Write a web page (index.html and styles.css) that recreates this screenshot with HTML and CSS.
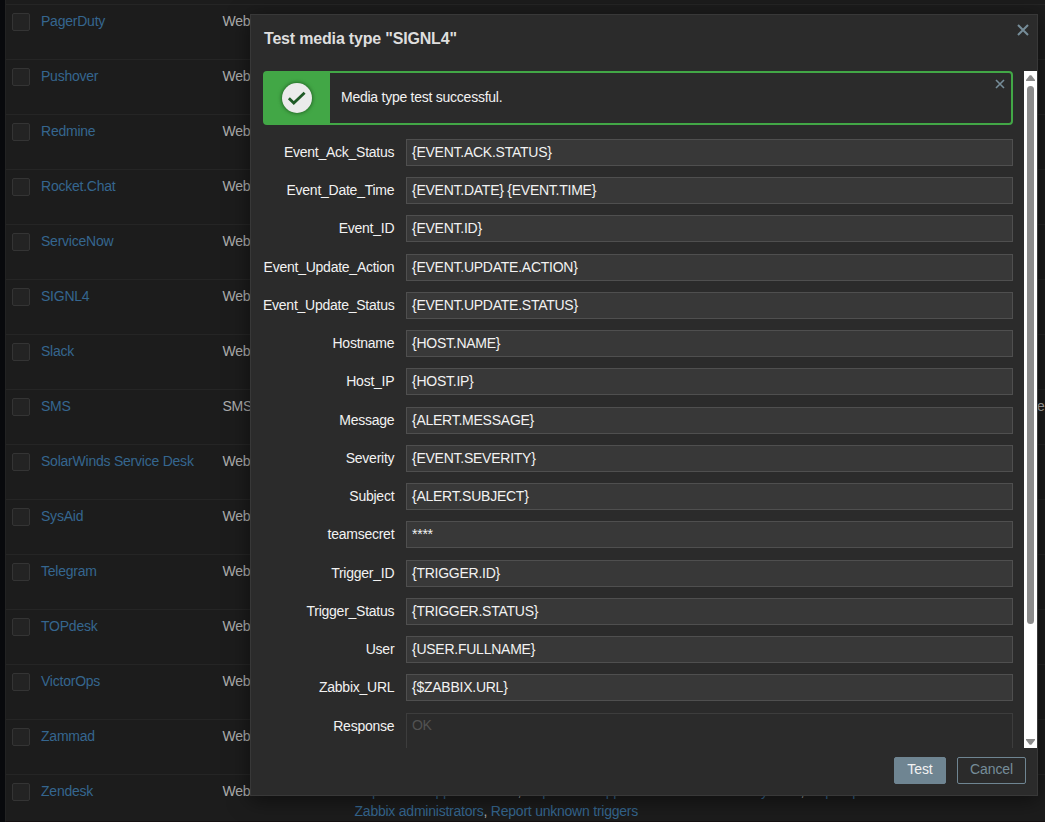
FILE: index.html
```
<!DOCTYPE html>
<html lang="en">
<head>
<meta charset="utf-8">
<title>Media types</title>
<link rel="stylesheet" href="styles.css">
</head>
<body>
<main class="list">
  <div class="row"><span class="check"></span><a class="name">PagerDuty</a><span class="type">Web</span></div>
  <div class="row"><span class="check"></span><a class="name">Pushover</a><span class="type">Web</span></div>
  <div class="row"><span class="check"></span><a class="name">Redmine</a><span class="type">Web</span></div>
  <div class="row"><span class="check"></span><a class="name">Rocket.Chat</a><span class="type">Web</span></div>
  <div class="row"><span class="check"></span><a class="name">ServiceNow</a><span class="type">Web</span></div>
  <div class="row"><span class="check"></span><a class="name">SIGNL4</a><span class="type">Web</span></div>
  <div class="row"><span class="check"></span><a class="name">Slack</a><span class="type">Web</span></div>
  <div class="row"><span class="check"></span><a class="name">SMS</a><span class="type">SMS</span><span class="details">e</span></div>
  <div class="row"><span class="check"></span><a class="name">SolarWinds Service Desk</a><span class="type">Web</span></div>
  <div class="row"><span class="check"></span><a class="name">SysAid</a><span class="type">Web</span></div>
  <div class="row"><span class="check"></span><a class="name">Telegram</a><span class="type">Web</span></div>
  <div class="row"><span class="check"></span><a class="name">TOPdesk</a><span class="type">Web</span></div>
  <div class="row"><span class="check"></span><a class="name">VictorOps</a><span class="type">Web</span></div>
  <div class="row"><span class="check"></span><a class="name">Zammad</a><span class="type">Web</span></div>
  <div class="row"><span class="check"></span><a class="name">Zendesk</a><span class="type">Web</span><span class="actions"><a>Report not supported items</a>, <a>Report not supported low level discovery rules</a>, <a>Report problems to<br>Zabbix administrators</a>, <a>Report unknown triggers</a></span></div>
</main>

<section class="dialog">
  <header class="dialog-head">
    <h4 class="title">Test media type "SIGNL4"</h4>
    <svg class="close" width="12" height="12" viewBox="0 0 12 12"><path d="M1 1L11 11M11 1L1 11"/></svg>
  </header>
  <div class="scroll">
    <div class="content">
      <div class="message">
        <div class="message-icon">
          <svg width="42" height="42" viewBox="0 0 42 42"><circle class="disc" cx="21" cy="21" r="15"/><path class="tick" d="M12.9 21.2L17.8 26L28.6 15.8"/></svg>
        </div>
        <span class="message-text">Media type test successful.</span>
        <svg class="message-close" width="10" height="10" viewBox="0 0 10 10"><path d="M1 1L9 9M9 1L1 9"/></svg>
      </div>
      <div class="form">
        <label>Event_Ack_Status</label><div class="field">{EVENT.ACK.STATUS}</div>
        <label>Event_Date_Time</label><div class="field">{EVENT.DATE} {EVENT.TIME}</div>
        <label>Event_ID</label><div class="field">{EVENT.ID}</div>
        <label>Event_Update_Action</label><div class="field">{EVENT.UPDATE.ACTION}</div>
        <label>Event_Update_Status</label><div class="field">{EVENT.UPDATE.STATUS}</div>
        <label>Hostname</label><div class="field">{HOST.NAME}</div>
        <label>Host_IP</label><div class="field">{HOST.IP}</div>
        <label>Message</label><div class="field">{ALERT.MESSAGE}</div>
        <label>Severity</label><div class="field">{EVENT.SEVERITY}</div>
        <label>Subject</label><div class="field">{ALERT.SUBJECT}</div>
        <label>teamsecret</label><div class="field">****</div>
        <label>Trigger_ID</label><div class="field">{TRIGGER.ID}</div>
        <label>Trigger_Status</label><div class="field">{TRIGGER.STATUS}</div>
        <label>User</label><div class="field">{USER.FULLNAME}</div>
        <label>Zabbix_URL</label><div class="field">{$ZABBIX.URL}</div>
        <label>Response</label><div class="field response">OK</div>
      </div>
    </div>
    <div class="scrollbar">
      <svg width="9" height="6" viewBox="0 0 9 6"><path d="M3.7 .3H5.3L9 5V6H0V5Z"/></svg>
      <div class="thumb"></div>
      <svg class="down" width="9" height="6" viewBox="0 0 9 6"><path d="M0 0H9V1L5.3 5.7H3.7L0 1Z"/></svg>
    </div>
  </div>
  <footer class="buttons"><button class="primary">Test</button><button class="secondary">Cancel</button></footer>
</section>
</body>
</html>
```
FILE: styles.css
```
* { box-sizing: border-box; }
body {
  margin: 0;
  height: 822px;
  overflow: hidden;
  background: #08090c;
  font-family: "Liberation Sans", Arial, sans-serif;
  font-size: 14px;
  line-height: 20px;
  letter-spacing: -0.25px;
}
.list {
  margin-left: 5px;
  padding-top: 4px;
  height: 822px;
  overflow: hidden;
  background: #1c1c1c;
  border-left: 1px solid #222;
  border-bottom: 1px solid #151011;
  letter-spacing: -0.23px;
}
.row {
  display: grid;
  grid-template-columns: 29px 181.5px 132px 682.5px 20px;
  height: 55px;
  padding: 6px 0 0 6px;
  border-top: 1px solid #252525;
  white-space: nowrap;
}
.check {
  width: 18px;
  height: 18px;
  margin-top: 2px;
  background: #232323;
  border: 1px solid #343434;
  border-radius: 2px;
}
.name, .actions a { color: #35668f; }
.type, .details, .actions { color: #adadad; }
.details { grid-column: 5; }
.dialog {
  position: absolute;
  left: 250px;
  top: 14px;
  width: 788px;
  height: 782px;
  background: #2b2b2b;
  border: 1px solid #383838;
  box-shadow: 0 4px 20px rgba(0, 0, 0, .5);
  color: #f2f2f2;
}
.dialog-head {
  display: flex;
  justify-content: space-between;
  height: 56px;
  padding: 8.5px 8px 0 13px;
}
.title {
  margin: 5.5px 0 0;
  font-size: 16px;
  letter-spacing: -0.18px;
  color: #dedede;
}
.close, .message-close { fill: none; stroke: #768d99; stroke-width: 2; }
.message-close { stroke-width: 1.6; }
.scroll {
  display: flex;
  justify-content: space-between;
  height: 677px;
  overflow: hidden;
}
.content { width: 750px; margin-left: 12px; }
.message {
  display: flex;
  height: 54px;
  border: 2px solid #42a746;
  border-radius: 4px;
  margin-bottom: 14px;
}
.message-icon {
  display: flex;
  align-items: center;
  justify-content: center;
  width: 65px;
  padding-right: 2px;
  background: #42a746;
}
.disc { fill: #ebebeb; filter: drop-shadow(0 0 2px #174d19); }
.tick { fill: none; stroke: #1f5a26; stroke-width: 2.8; }
.message-text { flex: 1; padding: 14px 0 0 11px; }
.message-close { margin: 6px 6px 0 0; }
.form {
  display: grid;
  grid-template-columns: 131.3px 607px;
  grid-auto-rows: 38.24px;
  column-gap: 11.7px;
}
.form label { text-align: right; padding-top: 3px; white-space: nowrap; }
.field {
  height: 27px;
  padding: 2px 5px;
  background: #383838;
  border: 1px solid #4f4f4f;
}
.response { height: 60px; padding-top: 1px; background: #2b2b2b; border-color: #3d3d3d; color: #525252; }
.scrollbar {
  width: 13px;
  background: #fff;
  display: flex;
  flex-direction: column;
  align-items: center;
  padding: 4px 0 3px;
  fill: #8b8b8b;
}
.thumb { width: 7px; height: 538px; margin-top: 5px; background: #8b8b8b; border-radius: 4px; }
.down { margin-top: auto; }
.buttons {
  display: flex;
  justify-content: flex-end;
  gap: 11px;
  padding: 9px 11px 0 0;
}
button {
  height: 27px;
  padding: 0 0 3px;
  border: 1px solid #6f8592;
  border-radius: 2px;
  font: inherit;
  line-height: 22px;
  letter-spacing: -0.1px;
}
.primary { width: 52px; background: #6f8592; color: #f2f2f2; }
.secondary { width: 69px; background: transparent; color: #768d99; }
```
